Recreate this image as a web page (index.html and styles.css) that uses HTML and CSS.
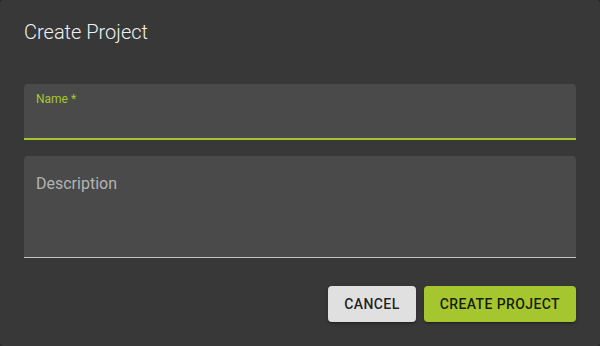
FILE: index.html
```html
<!DOCTYPE html>
<html lang="en">
<head>
    <meta charset="UTF-8">
    <meta name="viewport" content="width=device-width, initial-scale=1.0">
    <title>Create Project</title>
    <link rel="stylesheet" href="styles.css">
</head>
<body>
    <div class="dialog">
        <h2 class="dialog-title">Create Project</h2>

        <div class="dialog-content">
            <div class="field field-focused">
                <label class="field-label">Name *</label>
            </div>
            <div class="field field-multiline">
                <label class="field-label">Description</label>
            </div>
        </div>

        <div class="dialog-actions">
            <button class="btn btn-default">Cancel</button>
            <button class="btn btn-primary">Create Project</button>
        </div>
    </div>
</body>
</html>
```

FILE: styles.css
```css
body {
    margin: 0;
    background-color: #262626;
    font-family: Roboto, "Liberation Sans", Arial, sans-serif;
}
.dialog {
    height: 346px;
    box-sizing: border-box;
    background: #383838;
    border-radius: 4px;
    color: #fff;
}
.dialog-title {
    margin: 0;
    padding: 16px 24px;
    font-size: 20px;
    line-height: 32px;
    font-weight: 300;
    color: #f2f2f2;
}
.dialog-content {
    padding: 20px 24px 28px;
}
.field {
    background: #4a4a4a;
    border-radius: 4px 4px 0 0;
    box-sizing: border-box;
    padding: 0 12px;
}
.field-focused {
    height: 56px;
    padding-top: 7px;
    border-bottom: 2px solid #a6c630;
}
.field-focused .field-label {
    display: block;
    font-size: 12px;
    line-height: 17px;
    color: #a6c630;
}
.field-multiline {
    margin-top: 16px;
    height: 102px;
    padding-top: 16px;
    border-bottom: 1px solid #c4c4c4;
}
.field-multiline .field-label {
    display: block;
    font-size: 16px;
    line-height: 23px;
    color: #b3b3b3;
}
.dialog-actions {
    display: flex;
    justify-content: flex-end;
    gap: 8px;
    padding: 0 24px;
}
.btn {
    height: 36px;
    padding: 0 16px;
    border: none;
    border-radius: 4px;
    font-family: inherit;
    font-size: 14px;
    font-weight: 500;
    letter-spacing: 0.4px;
    text-transform: uppercase;
    white-space: nowrap;
    color: rgba(0, 0, 0, 0.87);
    box-shadow: 0 3px 1px -2px rgba(0,0,0,0.2), 0 2px 2px 0 rgba(0,0,0,0.14), 0 1px 5px 0 rgba(0,0,0,0.12);
    cursor: pointer;
}
.btn-default {
    background-color: #e0e0e0;
}
.btn-primary {
    background-color: #a6c630;
}
```
